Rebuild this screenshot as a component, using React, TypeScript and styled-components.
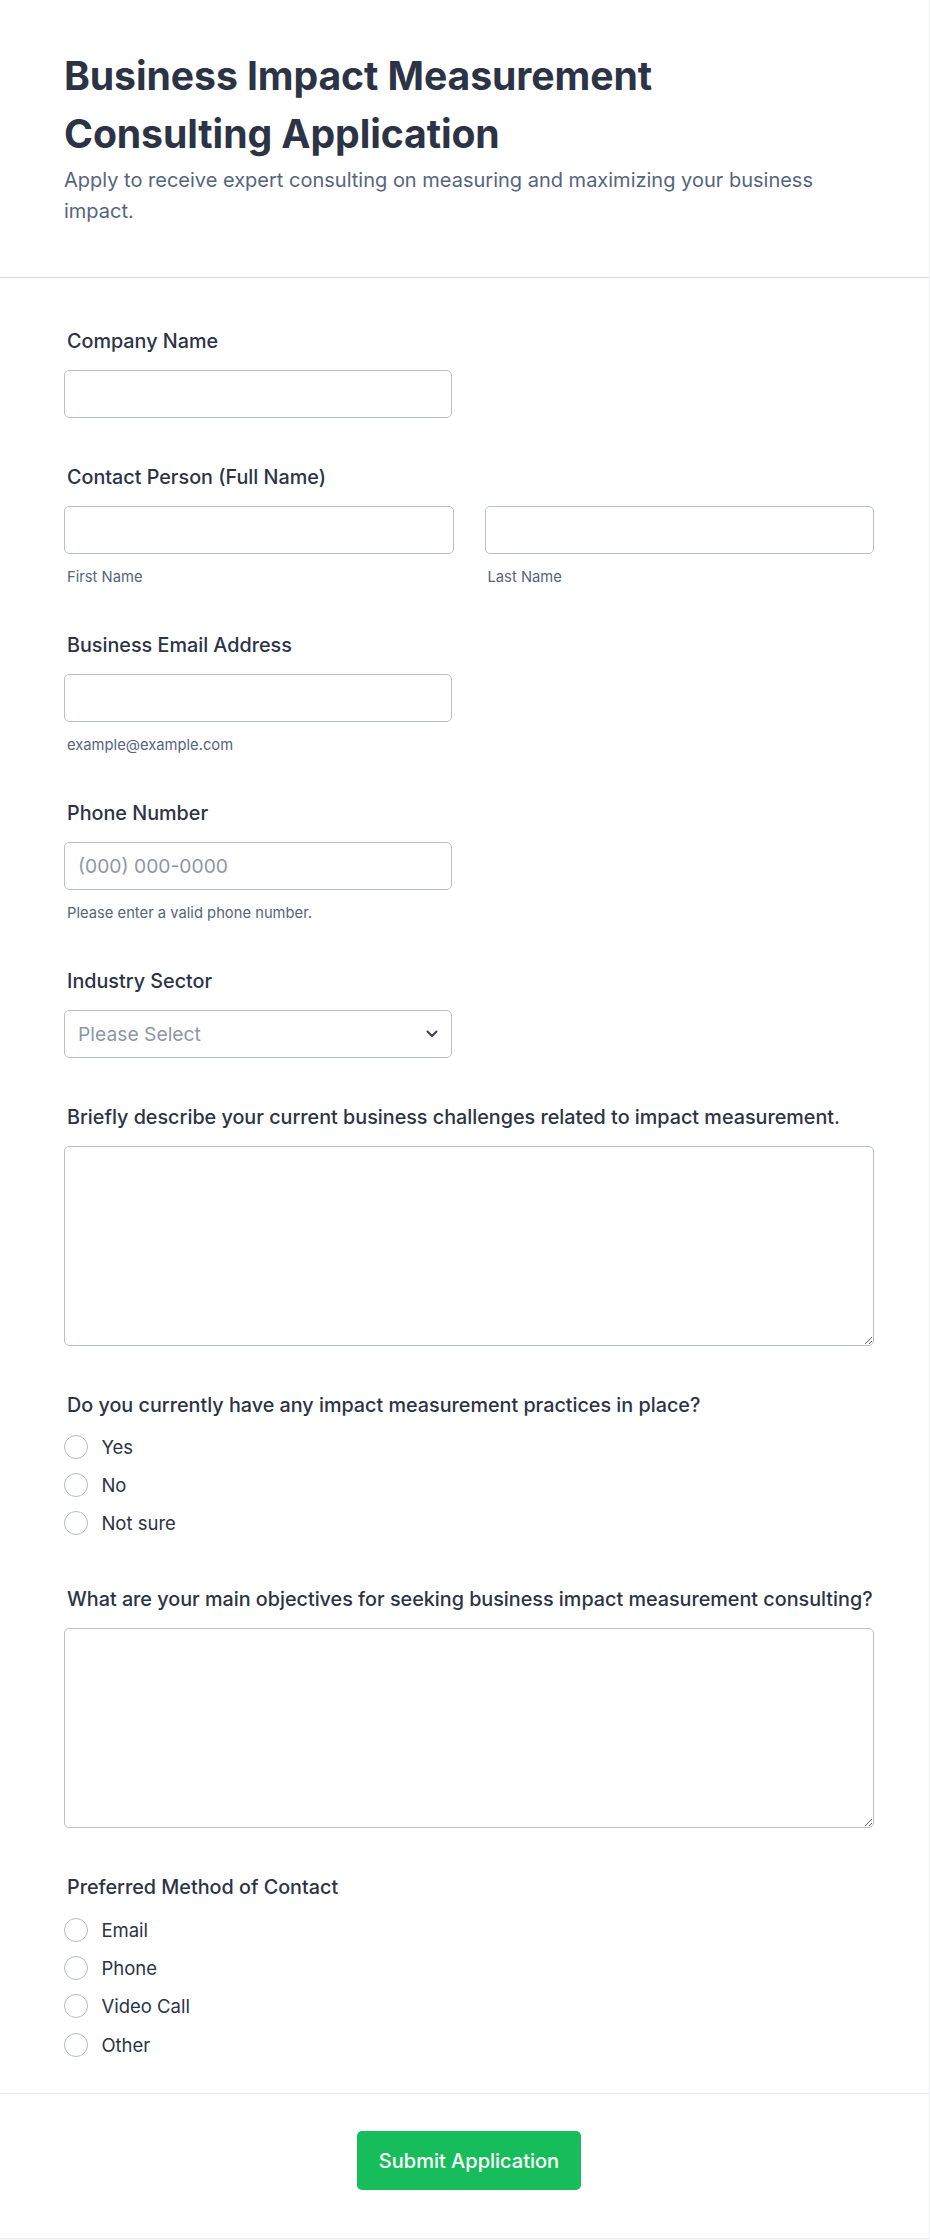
import React from "react";
import styled, { createGlobalStyle } from "styled-components";

const GlobalStyle = createGlobalStyle`
  html, body {
    margin: 0;
    padding: 0;
    background: #f4f5f8;
  }
  body {
    font-family: Inter, "Noto Sans", "Liberation Sans", sans-serif;
    -webkit-font-smoothing: antialiased;
  }
  * { box-sizing: border-box; }
`;

const Card = styled.div`
  width: 930px;
  background: #ffffff;
  border-right: 1px solid #eef0f4;
  border-bottom: 1px solid #eef0f4;
`;

const Header = styled.header`
  padding: 47px 54px 50px 64px;
  border-bottom: 1px solid #d9dce6;
`;

const HeaderText = styled.div`
  max-width: 772px;
`;

const Title = styled.h1`
  margin: 0;
  font-size: 39.2px;
  line-height: 57.5px;
  font-weight: 700;
  color: #2c3345;
  letter-spacing: -0.1px;
`;

const Subtitle = styled.p`
  margin: 2.5px 0 0;
  font-size: 20px;
  line-height: 31px;
  color: #57647e;
`;

const Form = styled.form`
  display: flex;
  flex-direction: column;
  gap: 47px;
  padding: 51px 55px 31px 64px;
`;

const Field = styled.div`
  display: flex;
  flex-direction: column;
`;

const Label = styled.label`
  display: block;
  padding-left: 3px;
  margin-bottom: 17px;
  font-size: 19.75px;
  line-height: 24px;
  font-weight: 500;
  color: #2c3345;
`;

const inputBase = `
  height: 48px;
  border: 1px solid #b9bfce;
  border-radius: 5px;
  background: #ffffff;
  padding: 0 13px;
  font-family: Inter, "Noto Sans", sans-serif;
  font-size: 19.3px;
  color: #2c3345;
  outline: none;
`;

const TextInput = styled.input<{ $width?: number }>`
  ${inputBase}
  width: ${(p) => (p.$width ? `${p.$width}px` : "100%")};
  &::placeholder {
    color: #8f96a6;
  }
`;

const SubLabel = styled.span`
  display: block;
  margin-top: 14px;
  padding-left: 3px;
  font-size: 14.75px;
  line-height: 18px;
  color: #57647e;
`;

const TwoCols = styled.div`
  display: grid;
  grid-template-columns: 1fr 1fr;
  column-gap: 31px;
`;

const Col = styled.div`
  display: flex;
  flex-direction: column;
`;

const SelectWrap = styled.div`
  position: relative;
  width: 388px;
`;

const Select = styled.select`
  ${inputBase}
  width: 100%;
  appearance: none;
  -webkit-appearance: none;
  color: #8f96a6;
`;

const Chevron = styled.svg`
  position: absolute;
  right: 14px;
  top: 50%;
  transform: translateY(-50%);
  pointer-events: none;
`;

const TextArea = styled.textarea`
  width: 100%;
  height: 200px;
  border: 1px solid #b9bfce;
  border-radius: 5px;
  padding: 12px 13px;
  font-family: Inter, "Noto Sans", sans-serif;
  font-size: 19.3px;
  color: #2c3345;
  outline: none;
  resize: vertical;
  display: block;
`;

const RadioList = styled.div`
  display: flex;
  flex-direction: column;
  gap: 14.33px;
  padding-top: 1.3px;
  padding-bottom: 5px;
`;

const RadioRow = styled.label`
  display: flex;
  align-items: center;
  gap: 13.4px;
  height: 24px;
  font-size: 18.5px;
  color: #2c3345;
  cursor: pointer;
`;

const RadioCircle = styled.input`
  appearance: none;
  -webkit-appearance: none;
  margin: 0;
  width: 24px;
  height: 24px;
  border: 1px solid #b3b9c8;
  border-radius: 50%;
  background: #ffffff;
  flex: none;
`;

const Footer = styled.footer`
  display: flex;
  justify-content: center;
  padding: 37.5px 55px 48px 64px;
  border-top: 1px solid #e8eaf0;
`;

const SubmitButton = styled.button`
  height: 59px;
  padding: 0 22px;
  border: none;
  border-radius: 5px;
  background: #18bd5b;
  color: #ffffff;
  font-family: Inter, "Noto Sans", sans-serif;
  font-size: 20px;
  font-weight: 500;
  cursor: pointer;
`;

const RadioGroup: React.FC<{ name: string; options: string[] }> = ({ name, options }) => (
  <RadioList>
    {options.map((o) => (
      <RadioRow key={o}>
        <RadioCircle type="radio" name={name} value={o} />
        {o}
      </RadioRow>
    ))}
  </RadioList>
);

export default function App() {
  return (
    <>
      <GlobalStyle />
      <Card>
        <Header>
          <HeaderText>
            <Title>Business Impact Measurement Consulting Application</Title>
            <Subtitle>
              Apply to receive expert consulting on measuring and maximizing your business impact.
            </Subtitle>
          </HeaderText>
        </Header>
        <Form onSubmit={(e) => e.preventDefault()}>
          <Field>
            <Label>Company Name</Label>
            <TextInput $width={388} />
          </Field>
          <Field>
            <Label>Contact Person (Full Name)</Label>
            <TwoCols>
              <Col>
                <TextInput />
                <SubLabel>First Name</SubLabel>
              </Col>
              <Col>
                <TextInput />
                <SubLabel>Last Name</SubLabel>
              </Col>
            </TwoCols>
          </Field>
          <Field>
            <Label>Business Email Address</Label>
            <TextInput $width={388} type="email" />
            <SubLabel>example@example.com</SubLabel>
          </Field>
          <Field>
            <Label>Phone Number</Label>
            <TextInput $width={388} placeholder="(000) 000-0000" />
            <SubLabel>Please enter a valid phone number.</SubLabel>
          </Field>
          <Field>
            <Label>Industry Sector</Label>
            <SelectWrap>
              <Select defaultValue="">
                <option value="">Please Select</option>
              </Select>
              <Chevron width="12" height="8" viewBox="0 0 12 8" fill="none">
                <polyline
                  points="1.5,1.5 6,6 10.5,1.5"
                  stroke="#3a4256"
                  strokeWidth="2"
                  strokeLinecap="round"
                  strokeLinejoin="round"
                />
              </Chevron>
            </SelectWrap>
          </Field>
          <Field>
            <Label>Briefly describe your current business challenges related to impact measurement.</Label>
            <TextArea />
          </Field>
          <Field>
            <Label>Do you currently have any impact measurement practices in place?</Label>
            <RadioGroup name="practices" options={["Yes", "No", "Not sure"]} />
          </Field>
          <Field>
            <Label>What are your main objectives for seeking business impact measurement consulting?</Label>
            <TextArea />
          </Field>
          <Field>
            <Label>Preferred Method of Contact</Label>
            <RadioGroup name="contact" options={["Email", "Phone", "Video Call", "Other"]} />
          </Field>
        </Form>
        <Footer>
          <SubmitButton type="submit">Submit Application</SubmitButton>
        </Footer>
      </Card>
    </>
  );
}
